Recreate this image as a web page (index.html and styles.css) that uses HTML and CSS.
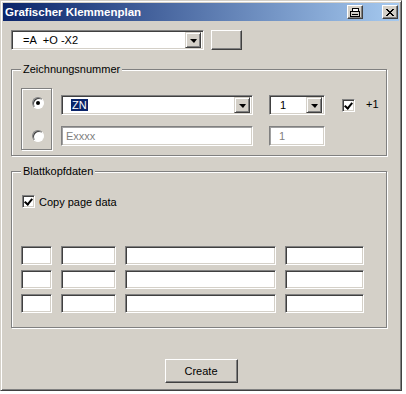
FILE: index.html
```html
<!DOCTYPE html>
<html lang="de">
<head>
    <meta charset="UTF-8">
    <meta name="viewport" content="width=device-width, initial-scale=1.0">
    <link rel="stylesheet" href="styles.css">
</head>
<body>
    <div class="window">
        <div class="titlebar">
            <span class="title">Grafischer Klemmenplan</span>
            <span class="caption-btn print">
                <svg width="10" height="9" viewBox="0 0 10 9">
                    <rect x="2.5" y="0.5" width="6" height="3" fill="#fff" stroke="#000"/>
                    <rect x="0.5" y="3.5" width="9" height="5" fill="#d4d0c8" stroke="#000"/>
                    <line x1="2" y1="6.5" x2="8" y2="6.5" stroke="#000"/>
                </svg>
            </span>
            <span class="caption-btn close">
                <svg width="8" height="7" viewBox="0 0 8 7">
                    <path d="M0 0 L7 7 M1 0 L8 7 M7 0 L0 7 M8 0 L1 7" stroke="#000" stroke-width="1"/>
                </svg>
            </span>
        </div>
        <div class="content">
            <div class="top-row">
                <div class="combo combo-main">
                    <span class="value">=A&nbsp; +O -X2</span>
                    <span class="drop"></span>
                </div>
                <button class="btn btn-empty"></button>
            </div>

            <div class="group group-number">
                <span class="legend">Zeichnungsnummer</span>
                <div class="number-body">
                    <div class="radio-frame">
                        <span class="radio checked"></span>
                        <span class="radio"></span>
                    </div>
                    <div class="number-rows">
                        <div class="row">
                            <div class="combo combo-zn">
                                <span class="value"><span class="selected">ZN</span></span>
                                <span class="drop"></span>
                            </div>
                            <div class="combo combo-num">
                                <span class="value">1</span>
                                <span class="drop"></span>
                            </div>
                            <span class="check checked"></span>
                            <span class="plus">+1</span>
                        </div>
                        <div class="row row-second">
                            <div class="textbox textbox-name disabled">Exxxx</div>
                            <div class="textbox textbox-num disabled">1</div>
                        </div>
                    </div>
                </div>
            </div>

            <div class="group group-header">
                <span class="legend">Blattkopfdaten</span>
                <label class="check-line"><span class="check checked"></span>Copy page data</label>
                <div class="header-grid">
                    <div class="textbox"></div><div class="textbox"></div><div class="textbox"></div><div class="textbox"></div>
                    <div class="textbox"></div><div class="textbox"></div><div class="textbox"></div><div class="textbox"></div>
                    <div class="textbox"></div><div class="textbox"></div><div class="textbox"></div><div class="textbox"></div>
                </div>
            </div>

            <div class="footer">
                <button class="btn btn-create">Create</button>
            </div>
        </div>
    </div>
</body>
</html>
```

FILE: styles.css
```css
body {
    margin: 0;
    background: #fff;
    font-family: "Liberation Sans", Arial, sans-serif;
    font-size: 11px;
    color: #000;
}

.window {
    box-sizing: border-box;
    width: 402px;
    height: 391px;
    background: #d4d0c8;
    border: 1px solid;
    border-color: #d4d0c8 #404040 #404040 #d4d0c8;
    box-shadow: inset 1px 1px #fff, inset -1px -1px #808080;
    padding: 2px;
}

/* title bar */
.titlebar {
    height: 18px;
    display: flex;
    align-items: center;
    background: linear-gradient(to right, #0a246a, #a6caf0);
    padding: 0 1px 0 2px;
}
.title {
    flex: 1;
    color: #fff;
    font-weight: bold;
    font-size: 11.5px;
}
.caption-btn {
    box-sizing: border-box;
    width: 16px;
    height: 14px;
    display: flex;
    align-items: center;
    justify-content: center;
    background: #d4d0c8;
    border: 1px solid;
    border-color: #fff #404040 #404040 #fff;
    box-shadow: inset -1px -1px #808080;
}
.caption-btn.print {
    margin-right: 19px;
}

.content {
    padding: 9px 0 0 8px;
}

/* top combo row */
.top-row {
    display: flex;
    gap: 7px;
}

.combo, .textbox {
    box-sizing: border-box;
    height: 20px;
    background: #fff;
    border: 1px solid;
    border-color: #808080 #fff #fff #808080;
    box-shadow: inset 1px 1px #404040, inset -1px -1px #d4d0c8;
    padding: 2px;
}
.combo {
    display: flex;
    align-items: center;
}
.combo .value {
    flex: 1;
    white-space: nowrap;
}
.drop {
    box-sizing: border-box;
    width: 16px;
    height: 16px;
    background: #d4d0c8;
    border: 1px solid;
    border-color: #d4d0c8 #404040 #404040 #d4d0c8;
    box-shadow: inset 1px 1px #fff, inset -1px -1px #808080;
    display: flex;
    align-items: center;
    justify-content: center;
}
.drop::after {
    content: "";
    border-left: 4px solid transparent;
    border-right: 3px solid transparent;
    border-top: 4px solid #000;
    margin-top: 1px;
}

.combo-main {
    width: 193px;
}
.combo-main .value {
    padding-left: 9px;
}

.btn {
    box-sizing: border-box;
    background: #d4d0c8;
    border: 1px solid;
    border-color: #fff #404040 #404040 #fff;
    box-shadow: inset -1px -1px #808080;
    font-family: "Liberation Sans", Arial, sans-serif;
    font-size: 11px;
    color: #000;
    padding: 0;
}
.btn-empty {
    width: 31px;
    height: 20px;
}

/* etched group boxes */
.group {
    box-sizing: border-box;
    width: 376px;
    border: 1px solid #808080;
    box-shadow: inset 1px 1px #fff, 1px 1px #fff;
}
.legend {
    display: block;
    width: fit-content;
    margin-top: -7px;
    padding: 0 2px;
    line-height: 13px;
    background: #d4d0c8;
}

.group-number {
    margin-top: 19px;
    padding: 0 0 5px 9px;
}
.number-body {
    display: flex;
    margin-top: 12px;
}
.radio-frame {
    box-sizing: border-box;
    width: 31px;
    height: 62px;
    border: 1px solid #808080;
    box-shadow: inset 1px 1px #fff, 1px 1px #fff;
    display: flex;
    flex-direction: column;
    gap: 21px;
    padding: 8px 0 0 10px;
}
.radio {
    box-sizing: border-box;
    width: 12px;
    height: 12px;
    border-radius: 50%;
    background: #fff;
    border: 1px solid;
    border-color: #808080 #fff #fff #808080;
    box-shadow: inset 1px 1px #404040;
    display: flex;
    align-items: center;
    justify-content: center;
}
.radio.checked::after {
    content: "";
    width: 4px;
    height: 4px;
    border-radius: 50%;
    background: #000;
}

.number-rows {
    margin: 7px 0 0 9px;
}
.row {
    display: flex;
    align-items: center;
}
.row-second {
    margin-top: 11px;
}
.combo-zn, .textbox-name {
    width: 192px;
    margin-right: 16px;
}
.combo-zn .value {
    padding-left: 7px;
}
.selected {
    background: #0a246a;
    color: #fff;
    padding: 0 1px;
}
.combo-num, .textbox-num {
    width: 56px;
}
.combo-num .value {
    padding-left: 8px;
}
.textbox {
    line-height: 14px;
}
.textbox.disabled {
    color: #808080;
    box-shadow: inset 1px 1px #a0a0a0, inset -1px -1px #d4d0c8;
}
.textbox-name {
    padding-left: 4px;
}
.textbox-num {
    padding-left: 9px;
}

.check {
    box-sizing: border-box;
    width: 13px;
    height: 13px;
    background: #fff;
    border: 1px solid;
    border-color: #808080 #fff #fff #808080;
    box-shadow: inset 1px 1px #404040, inset -1px -1px #d4d0c8;
    position: relative;
}
.check.checked::after {
    content: "";
    position: absolute;
    left: 3px;
    top: 1px;
    width: 3px;
    height: 6px;
    border: solid #000;
    border-width: 0 2px 2px 0;
    transform: rotate(40deg);
}
.row .check {
    margin-left: 17px;
}
.plus {
    margin-left: 11px;
    margin-top: -3px;
}

.group-header {
    margin-top: 15px;
    padding: 0 0 14px 9px;
}
.check-line {
    display: flex;
    align-items: center;
    gap: 4px;
    height: 13px;
    margin: 17px 0 0 1px;
}
.header-grid {
    margin-top: 38px;
    display: grid;
    grid-template-columns: 31px 55px 151px 79px;
    column-gap: 9px;
    row-gap: 5px;
}
.header-grid .textbox {
    height: 19px;
}

.footer {
    display: flex;
    justify-content: center;
    margin-top: 31px;
    padding-right: 8px;
}
.btn-create {
    width: 73px;
    height: 24px;
}
```
